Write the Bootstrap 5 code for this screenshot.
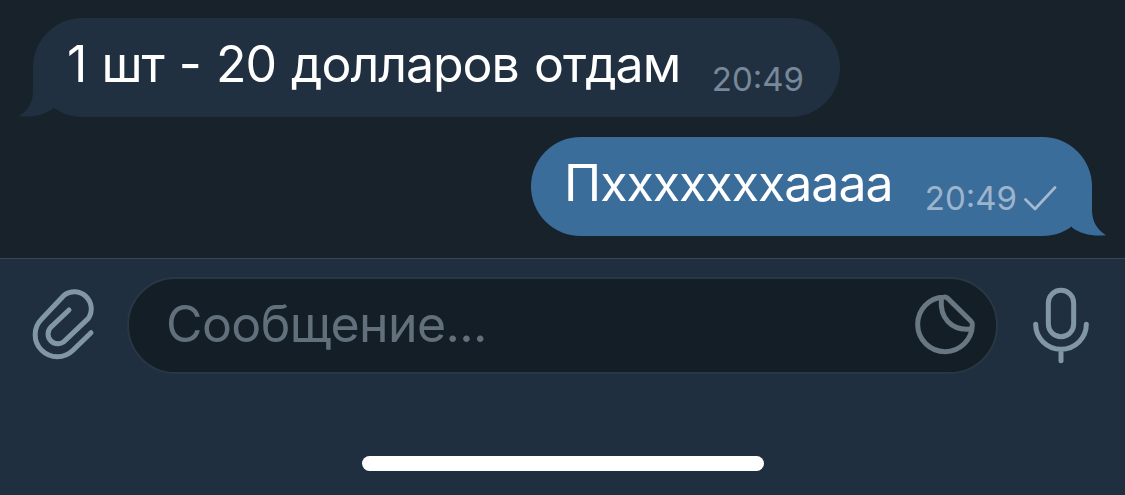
<!DOCTYPE html>
<html lang="ru">
<head>
  <meta charset="UTF-8">
  <meta name="viewport" content="width=device-width, initial-scale=1.0">
  <title>Чат</title>
  <link href="https://cdn.jsdelivr.net/npm/bootstrap@5.3.2/dist/css/bootstrap.min.css" rel="stylesheet">
  <style>
    body {
      background-color: #18222b;
      font-family: Inter, "Liberation Sans", sans-serif;
      overflow: hidden;
    }
    svg {
      display: block;
      fill: none;
      stroke: currentColor;
      stroke-linecap: round;
      stroke-linejoin: round;
    }
    .messages {
      height: 258px;
      padding: 18px 33px;
      gap: 20px;
    }
    .bubble {
      height: 99px;
      border-radius: 49.5px;
      color: #fff;
      white-space: nowrap;
    }
    .bubble-in {
      width: 807px;
      padding-left: 34px;
      padding-right: 36px;
      background-color: #213040;
    }
    .bubble-out {
      width: 561px;
      padding-left: 33px;
      padding-right: 35px;
      background-color: #3b6d9a;
    }
    .bubble-text {
      font-size: 50px;
      line-height: 92px;
      letter-spacing: -1px;
      word-spacing: 2px;
    }
    .bubble-time {
      margin-top: 23px;
      font-size: 33px;
      line-height: 76px;
      color: #768899;
    }
    .bubble-out .bubble-time {
      color: #9db5cc;
    }
    .tail {
      bottom: 0;
      stroke: none;
    }
    .bubble-in .tail {
      left: -14px;
      fill: #213040;
    }
    .bubble-out .tail {
      right: -14px;
      fill: #3b6d9a;
      transform: scaleX(-1);
    }
    .check {
      margin: 48px 0 0 7px;
      color: #a3bad0;
    }
    .composer {
      height: 237px;
      border-top: 1px solid #3a4756;
      background-color: #202f3f;
    }
    .composer-row {
      padding: 18px 15px 0 20px;
      color: #8297a5;
    }
    .field {
      width: 871px;
      height: 97px;
      margin-left: 17px;
      padding: 0 16px 4px 37px;
      border: 2px solid #293744;
      border-radius: 48.5px;
      background-color: #141e27;
      color: #697782;
    }
    .placeholder-text {
      font-size: 50px;
      line-height: 92px;
      letter-spacing: -0.6px;
      color: #62707c;
    }
    .home-bar {
      width: 402px;
      height: 15px;
      margin-top: 81px;
      margin-left: 362px;
      background-color: #fff;
    }
  </style>
</head>
<body>
  <!-- Messages -->
  <main class="messages d-flex flex-column">
    <div class="bubble bubble-in position-relative d-flex justify-content-between align-self-start">
      <svg class="tail position-absolute" width="49" height="50" viewBox="0 0 49 50">
        <path d="M14 0V24C14 35 9 44 0 49.200C14 50.500 25 48 34 41.500L40 20Z"/>
      </svg>
      <span class="bubble-text position-relative">1 шт - 20 долларов отдам</span>
      <span class="bubble-time">20:49</span>
    </div>
    <div class="bubble bubble-out position-relative d-flex align-self-end">
      <svg class="tail position-absolute" width="49" height="50" viewBox="0 0 49 50">
        <path d="M14 0V24C14 35 9 44 0 49.200C14 50.500 25 48 34 41.500L40 20Z"/>
      </svg>
      <span class="bubble-text position-relative">Пхххххххаааа</span>
      <span class="bubble-time ms-auto position-relative">20:49</span>
      <svg class="check position-relative" width="33" height="27" viewBox="0 0 33 27" stroke-width="2.7">
        <path d="M1.500 14.500L11 24L31 2.500"/>
      </svg>
    </div>
  </main>

  <!-- Message input -->
  <footer class="composer">
    <div class="composer-row d-flex align-items-start">
      <svg width="90" height="98" viewBox="0 7 270 294" stroke-width="15">
        <path d="M213 174L159 227A66 66 0 0 1 65 133L133 61A51 51 0 0 1 205 131L135 198A29 29 0 0 1 92 158L147 106"/>
      </svg>
      <div class="field d-flex align-items-center justify-content-between">
        <span class="placeholder-text">Сообщение...</span>
        <svg width="80" height="80" viewBox="90 100 240 240" stroke-width="15">
          <path d="M307 222A82 82 0 1 1 222 139Q228 138 233 143L303 212Q307 216 307 222Z"/>
          <path d="M214 144C209 202 244 240 301 235"/>
        </svg>
      </div>
      <svg class="ms-auto" width="100" height="98" viewBox="0 6 300 294" stroke-width="15">
        <rect x="115" y="46" width="76" height="139" rx="38"/>
        <path d="M77 148A76 75 0 0 0 229 148M153 223V257"/>
      </svg>
    </div>
    <div class="home-bar rounded-pill"></div>
  </footer>

  <script src="https://cdn.jsdelivr.net/npm/bootstrap@5.3.2/dist/js/bootstrap.bundle.min.js"></script>
</body>
</html>
